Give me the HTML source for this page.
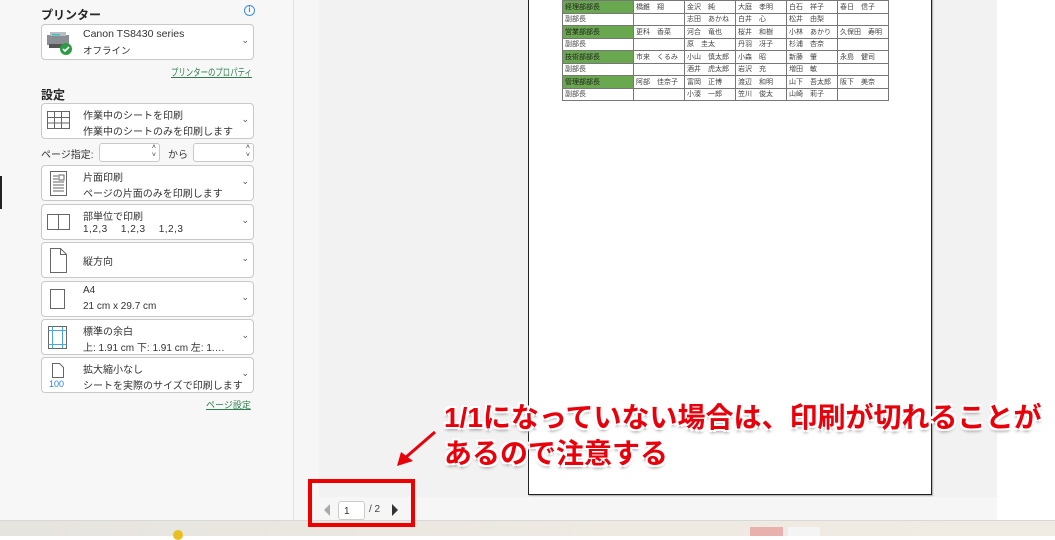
<!DOCTYPE html>
<html><head><meta charset="utf-8"><style>
*{margin:0;padding:0;box-sizing:border-box}
body{width:1055px;height:536px;overflow:hidden;background:#fff;font-family:"Liberation Sans","Noto Sans CJK JP",sans-serif;position:relative;color:#333}
.abs{position:absolute}
#left{left:0;top:0;width:294px;height:520px;background:#f7f7f7;border-right:1px solid #e2e2e2}
#gut{left:294px;top:0;width:25px;height:497px;background:#f6f6f6}
#prev{left:319px;top:0;width:678px;height:497px;background:#f2f2f2}
#bar{left:294px;top:497px;width:703px;height:23px;background:#f6f6f6}
#bot{left:0;top:520px;width:1055px;height:16px;background:linear-gradient(90deg,#e6e4df,#eeeae2 60%,#f0ece4);border-top:1px solid #d8d8d8}
.h{font-size:12px;font-weight:bold;color:#262626}
.card{position:absolute;left:41px;width:213px;background:#fff;border:1px solid #c9c9c9;border-radius:4px;font-size:10px;color:#333}
.card .t1{position:absolute;left:41px;top:3px}
.card .t2{position:absolute;left:41px;top:19px}
.card .chev{position:absolute;right:4px;top:50%;margin-top:-7px;font-size:9px;color:#555}
.link{font-size:9px;color:#2e7d4f;text-decoration:underline;white-space:nowrap}
#page{left:528px;top:-2px;width:404px;height:497px;background:#fff;border:1px solid #222;border-top:none;box-shadow:1px 1px 1px #aaa}
table{position:absolute;left:562px;top:0;border-collapse:collapse;font-size:7px;color:#444}
td{border:1px solid #777;height:12.5px;padding:0 2px;white-space:nowrap;width:51px}
td.g{background:#6aa84f;width:71px;color:#222}
td.l{width:71px}
.ann{font-size:28px;font-weight:bold;color:#e8000b;text-shadow:-2px -2px 0 #fff,2px -2px 0 #fff,-2px 2px 0 #fff,2px 2px 0 #fff,0 3px 3px #999;white-space:nowrap}
</style></head><body>
<div id="left" class="abs"></div>
<div id="gut" class="abs"></div>
<div id="prev" class="abs"></div>
<div id="bar" class="abs"></div>
<div id="bot" class="abs"></div>
<div class="abs" style="left:0;top:176px;width:2px;height:33px;background:#222"></div>

<div class="abs h" style="left:41px;top:6px">プリンター</div>
<div class="abs" style="left:244px;top:5px;width:11px;height:11px;border:1.3px solid #3b8fe0;border-radius:50%;color:#3b8fe0;font-size:8px;line-height:8px;text-align:center;font-weight:bold">i</div>
<div class="card" style="top:24px;height:36px">
 <svg class="abs" style="left:4px;top:6px" width="28" height="26"><rect x="1" y="4" width="22" height="10" fill="#8a8f96"/><rect x="4" y="1" width="16" height="4" fill="#b9bec4"/><rect x="6" y="3" width="8" height="1.5" fill="#3fc4b4"/><rect x="3" y="13" width="18" height="4" fill="#555"/><circle cx="20" cy="18" r="6" fill="#2e9b47"/><path d="M17 18l2 2 4-4" stroke="#fff" stroke-width="1.6" fill="none"/></svg>
 <div class="t1" style="font-size:10.5px">Canon TS8430 series</div><div class="t2" style="top:18px;font-size:9.5px">オフライン</div><div class="chev">⌄</div></div>
<div class="abs link" style="left:171px;top:64px;font-size:10px;transform:scaleX(0.74);transform-origin:0 0">プリンターのプロパティ</div>

<div class="abs h" style="left:41px;top:86px">設定</div>
<div class="card" style="top:103px;height:36px">
 <svg class="abs" style="left:4px;top:6px" width="26" height="24"><g stroke="#666" fill="none" stroke-width="1"><rect x="1.5" y="1.5" width="22" height="17"/><path d="M1.5 7.5h22M1.5 13h22M8.5 1.5v17M15.5 1.5v17"/></g></svg>
 <div class="t1">作業中のシートを印刷</div><div class="t2">作業中のシートのみを印刷します</div><div class="chev">⌄</div></div>
<div class="abs" style="left:41px;top:146px;font-size:10px">ページ指定:</div>
<div class="abs" style="left:99px;top:143px;width:61px;height:19px;background:#fff;border:1px solid #c9c9c9;border-radius:3px;font-size:7px;text-align:right;padding-right:3px;line-height:8px">˄<br>˅</div>
<div class="abs" style="left:168px;top:146px;font-size:10px">から</div>
<div class="abs" style="left:193px;top:143px;width:61px;height:19px;background:#fff;border:1px solid #c9c9c9;border-radius:3px;font-size:7px;text-align:right;padding-right:3px;line-height:8px">˄<br>˅</div>
<div class="card" style="top:165px;height:36px">
 <svg class="abs" style="left:6px;top:4px" width="22" height="28"><g stroke="#666" fill="none"><rect x="2.5" y="1.5" width="16" height="24"/><path d="M5 6h5M5 9h5M5 12h11M5 15h11M5 18h11M5 21h11"/><rect x="11" y="5" width="5" height="5"/></g></svg>
 <div class="t1">片面印刷</div><div class="t2">ページの片面のみを印刷します</div><div class="chev">⌄</div></div>
<div class="card" style="top:204px;height:36px">
 <svg class="abs" style="left:4px;top:8px" width="26" height="18"><g stroke="#666" fill="none"><rect x="1.5" y="1.5" width="22" height="15"/><path d="M12.5 1.5v15"/></g></svg>
 <div class="t1">部単位で印刷</div><div class="t2" style="letter-spacing:.5px">1,2,3&nbsp;&nbsp;&nbsp; 1,2,3&nbsp;&nbsp;&nbsp; 1,2,3</div><div class="chev">⌄</div></div>
<div class="card" style="top:242px;height:36px">
 <svg class="abs" style="left:6px;top:4px" width="22" height="28"><path d="M2.5 1.5h10l6 6v18h-16z M12.5 1.5v6h6" stroke="#666" fill="none"/></svg>
 <div class="t1" style="top:10px">縦方向</div><div class="chev">⌄</div></div>
<div class="card" style="top:281px;height:36px">
 <svg class="abs" style="left:7px;top:6px" width="18" height="24"><rect x="1.5" y="1.5" width="14" height="19" stroke="#666" fill="none"/></svg>
 <div class="t1">A4</div><div class="t2">21 cm x 29.7 cm</div><div class="chev">⌄</div></div>
<div class="card" style="top:319px;height:36px">
 <svg class="abs" style="left:5px;top:5px" width="22" height="26"><rect x="1.5" y="1.5" width="18" height="22" stroke="#666" fill="none"/><path d="M1.5 5.5h18M1.5 19.5h18M5.5 1.5v22M15.5 1.5v22" stroke="#4aa3e6"/></svg>
 <div class="t1">標準の余白</div><div class="t2">上: 1.91 cm 下: 1.91 cm 左: 1.…</div><div class="chev">⌄</div></div>
<div class="card" style="top:357px;height:36px">
 <svg class="abs" style="left:8px;top:4px" width="18" height="18"><path d="M2.5 1.5h7l4 4v10h-11z" stroke="#666" fill="none"/></svg>
 <div class="abs" style="left:7px;top:21px;font-size:9px;color:#2a86d6">100</div>
 <div class="t1">拡大縮小なし</div><div class="t2">シートを実際のサイズで印刷します</div><div class="chev">⌄</div></div>
<div class="abs link" style="left:206px;top:398px">ページ設定</div>

<div id="page" class="abs"></div>
<table>
<tr><td class="g">経理部部長</td><td>橋錐　翔</td><td>金沢　純</td><td>大庭　孝明</td><td>白石　祥子</td><td>春日　信子</td></tr>
<tr><td class="l">副部長</td><td></td><td>志田　あかね</td><td>白井　心</td><td>松井　由梨</td><td></td></tr>
<tr><td class="g">営業部部長</td><td>更科　香菜</td><td>河合　竜也</td><td>桜井　和樹</td><td>小林　あかり</td><td>久保田　寿明</td></tr>
<tr><td class="l">副部長</td><td></td><td>原　圭太</td><td>丹羽　冴子</td><td>杉浦　杏奈</td><td></td></tr>
<tr><td class="g">技術部部長</td><td>市来　くるみ</td><td>小山　慎太郎</td><td>小森　昭</td><td>新藤　肇</td><td>永島　健司</td></tr>
<tr><td class="l">副部長</td><td></td><td>酒井　虎太郎</td><td>岩沢　充</td><td>増田　敏</td><td></td></tr>
<tr><td class="g">管理部部長</td><td>阿部　佳奈子</td><td>富岡　正博</td><td>渡辺　和明</td><td>山下　吾太郎</td><td>阪下　美奈</td></tr>
<tr><td class="l">副部長</td><td></td><td>小湊　一郎</td><td>笠川　俊太</td><td>山崎　莉子</td><td></td></tr>
</table>

<div class="abs ann" style="left:444px;top:396px">1/1になっていない場合は、印刷が切れることが</div>
<div class="abs ann" style="left:444px;top:432px">あるので注意する</div>
<svg class="abs" style="left:393px;top:428px" width="50" height="42"><path d="M42 4L12 30" stroke="#e8000b" stroke-width="3"/><path d="M4 38l4-14 12 9z" fill="#e8000b"/></svg>

<div class="abs" style="left:308px;top:479px;width:107px;height:48px;border:4px solid #e00;"></div>
<div class="abs" style="left:324px;top:504px;width:0;height:0;border-top:6px solid transparent;border-bottom:6px solid transparent;border-right:6px solid #aaa"></div>
<div class="abs" style="left:338px;top:501px;width:27px;height:19px;background:#fff;border:1px solid #ccc;border-radius:3px;font-size:10px;padding:4px 0 0 5px">1</div>
<div class="abs" style="left:369px;top:504px;font-size:10px;color:#444">/ 2</div>
<div class="abs" style="left:392px;top:504px;width:0;height:0;border-top:6px solid transparent;border-bottom:6px solid transparent;border-left:6px solid #333"></div>
<div class="abs" style="left:750px;top:527px;width:33px;height:9px;background:#e9b1ad"></div>
<div class="abs" style="left:788px;top:527px;width:32px;height:9px;background:#f4f4f4"></div>
<div class="abs" style="left:173px;top:530px;width:10px;height:10px;border-radius:50%;background:#e8c020"></div>
</body></html>
